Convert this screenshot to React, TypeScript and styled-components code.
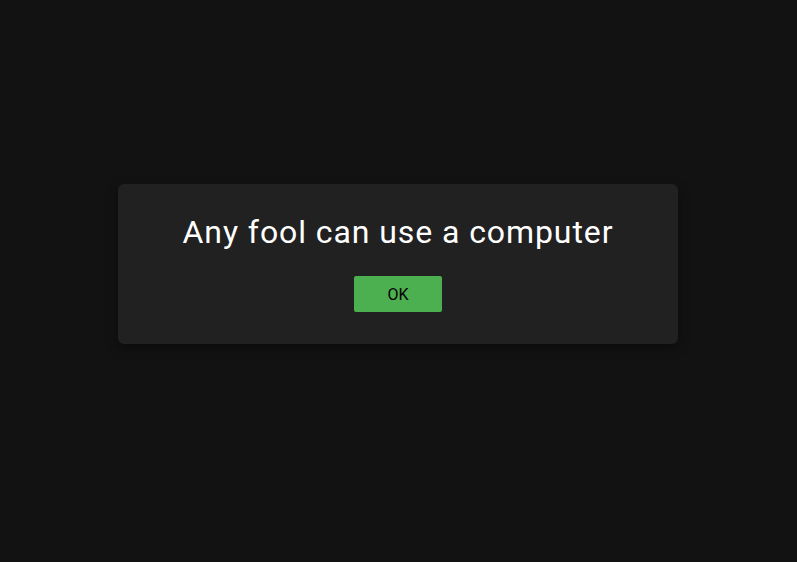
import React from "react";
import styled, { createGlobalStyle } from "styled-components";

const Global = createGlobalStyle`
  html, body { margin: 0; padding: 0; background: #121212; }
  body { font-family: Roboto, "Noto Sans", sans-serif; }
`;

const Page = styled.div`
  width: 796px;
  height: 562px;
  display: flex;
  align-items: center;
  justify-content: center;
  background: #121212;
`;

const Dialog = styled.div`
  width: 560px;
  height: 160px;
  box-sizing: border-box;
  margin-top: -34px;
  padding: 29px 24px 32px;
  background: #212121;
  border-radius: 6px;
  box-shadow: 0 4px 12px rgba(0, 0, 0, 0.35);
  display: flex;
  flex-direction: column;
  align-items: center;
  gap: 25px;
`;

const Title = styled.h2`
  margin: 0;
  font-size: 32px;
  font-weight: 400;
  letter-spacing: 0.92px;
  color: #ffffff;
  line-height: 38px;
`;

const Button = styled.button`
  width: 88px;
  height: 36px;
  border: none;
  border-radius: 2px;
  background: #4caf50;
  color: #000;
  font-family: Roboto, sans-serif;
  font-size: 16px;
  padding: 0;
  cursor: pointer;
`;

export default function App() {
  return (
    <>
      <Global />
      <Page>
        <Dialog>
          <Title>Any fool can use a computer</Title>
          <Button>OK</Button>
        </Dialog>
      </Page>
    </>
  );
}
